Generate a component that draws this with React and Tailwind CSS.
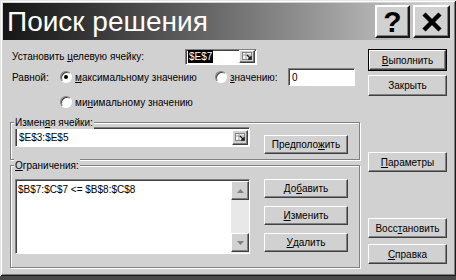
import React from "react";

const raised =
  "border border-t-white border-l-white border-r-[#404040] border-b-[#404040] shadow-[inset_-1px_-1px_0_#808080] bg-[#d1d1d1]";
const sunken =
  "border border-t-[#808080] border-l-[#808080] border-r-white border-b-white shadow-[inset_1px_1px_0_#404040] bg-white";

function Btn({ children, className = "", def = false }) {
  if (def) {
    return (
      <div className={`border border-black ${className}`}>
        <div className={`flex h-full w-full items-center justify-center ${raised}`}>{children}</div>
      </div>
    );
  }
  return <div className={`flex items-center justify-center ${raised} ${className}`}>{children}</div>;
}

function RefBtn({ className = "" }) {
  return (
    <div className={`flex items-center justify-center ${raised} ${className}`}>
      <svg width="11" height="9" viewBox="0 0 11 9">
        <rect x="0.5" y="0.5" width="9" height="7" fill="#f4f4f4" stroke="#808080" />
        <line x1="0.5" y1="3" x2="9.5" y2="3" stroke="#9a9a9a" />
        <line x1="4" y1="0.5" x2="4" y2="7.5" stroke="#9a9a9a" />
        <path d="M5 3 L9 7 M6 7 L9 7 L9 4" stroke="#202020" strokeWidth="1.4" fill="none" />
      </svg>
    </div>
  );
}

function Radio({ checked }) {
  return (
    <div className="relative h-[12px] w-[12px] shrink-0 rounded-full border border-t-[#808080] border-l-[#808080] border-r-white border-b-white bg-white shadow-[inset_1px_1px_0_#404040]">
      {checked && <div className="absolute left-[3px] top-[3px] h-[4px] w-[4px] rounded-full bg-black" />}
    </div>
  );
}

function Arrow({ up }) {
  return (
    <svg width="7" height="4" viewBox="0 0 7 4">
      {up ? <path d="M0 4 L3.5 0 L7 4 Z" fill="#808080" /> : <path d="M0 0 L3.5 4 L7 0 Z" fill="#808080" />}
    </svg>
  );
}

export default function App() {
  return (
    <div className="h-[280px] w-[456px] overflow-hidden bg-[#4a4a4a] font-['Liberation_Sans',Arial,sans-serif] text-[10px] leading-[13px] text-black">
      <div className="flex h-[276px] w-[456px] flex-col bg-[#d1d1d1] p-[3px] shadow-[inset_1px_1px_0_#e6e6e6,inset_-1px_-1px_0_#1a1a1a,inset_2px_2px_0_#ffffff,inset_-2px_-2px_0_#808080]">
        {/* Title bar */}
        <div className="flex h-[37px] shrink-0 items-center bg-gradient-to-r from-[#161616] to-[#d8d8d8] pl-[4px] pr-[3px]">
          <span className="text-[28px] leading-[30px] text-white">Поиск решения</span>
          <div className="ml-auto flex gap-[3px]">
            <div className="flex h-[33px] w-[35px] items-center justify-center border-2 border-t-white border-l-white border-r-[#1a1a1a] border-b-[#1a1a1a] bg-[#d1d1d1] shadow-[inset_-1px_-1px_0_#808080]">
              <span className="text-[30px] font-bold leading-[30px]">?</span>
            </div>
            <div className="flex h-[33px] w-[37px] items-center justify-center border-2 border-t-white border-l-white border-r-[#1a1a1a] border-b-[#1a1a1a] bg-[#d1d1d1] shadow-[inset_-1px_-1px_0_#808080]">
              <svg width="22" height="22" viewBox="0 0 22 22">
                <path d="M3 3 L19 19 M19 3 L3 19" stroke="#000" strokeWidth="4.5" />
              </svg>
            </div>
          </div>
        </div>

        {/* Body */}
        <div className="flex flex-1">
          {/* Left column */}
          <div className="ml-[7px] flex w-[350px] flex-col">
            <div className="mt-[9px] flex h-[15px] items-center">
              <span className="w-[175px] pl-[2px]">
                Установить <u>ц</u>елевую ячейку:
              </span>
              <div className={`flex h-[16px] w-[72px] items-center ${sunken} p-[1px]`}>
                <span className="ml-[1px] bg-black px-[1px] text-white">$E$7</span>
                <RefBtn className="ml-auto h-[13px] w-[16px]" />
              </div>
            </div>

            <div className="mt-[4px] flex h-[18px] items-center">
              <span className="w-[50px] pl-[2px]">Равной:</span>
              <Radio checked />
              <span className="ml-[3px] w-[140px]">
                <u>м</u>аксимальному значению
              </span>
              <Radio />
              <span className="ml-[3px] w-[58px]">
                <u>з</u>начению:
              </span>
              <div className={`flex h-[18px] w-[67px] items-center pl-[3px] ${sunken}`}>0</div>
            </div>

            <div className="mt-[9px] flex h-[14px] items-center">
              <span className="w-[50px]" />
              <Radio />
              <span className="ml-[3px]">
                ми<u>н</u>имальному значению
              </span>
            </div>

            {/* Group 1 */}
            <div className="relative mt-[13px] flex h-[38px] border border-[#808080] px-[4px] pt-[4px] shadow-[inset_1px_1px_0_#fff,1px_1px_0_#fff]">
              <span className="absolute -top-[7px] left-[3px] bg-[#d1d1d1] px-[1px]">
                Измен<u>я</u>я ячейки:
              </span>
              <div className={`flex h-[20px] w-[235px] items-center ${sunken} pl-[3px] pr-[1px]`}>
                <span>$E$3:$E$5</span>
                <RefBtn className="ml-auto h-[15px] w-[16px]" />
              </div>
              <Btn className="ml-[14px] mt-[8px] h-[19px] w-[84px]">
                Предполо<u>ж</u>ить
              </Btn>
            </div>

            {/* Group 2 */}
            <div className="relative mt-[5px] flex h-[103px] border border-[#808080] px-[4px] pt-[13px] shadow-[inset_1px_1px_0_#fff,1px_1px_0_#fff]">
              <span className="absolute -top-[7px] left-[3px] bg-[#d1d1d1] px-[1px]">
                <u>О</u>граничения:
              </span>
              <div className={`flex h-[75px] w-[235px] ${sunken} pl-[1px] pt-[1px]`}>
                <div className="flex-1 pl-[1px] pt-[2px]">$B$7:$C$7 &lt;= $B$8:$C$8</div>
                <div className="flex w-[18px] flex-col bg-[#e8e8e8]">
                  <div className={`flex h-[19px] items-center justify-center ${raised}`}>
                    <Arrow up />
                  </div>
                  <div className="flex-1" />
                  <div className={`mb-[1px] flex h-[19px] items-center justify-center ${raised}`}>
                    <Arrow />
                  </div>
                </div>
              </div>
              <div className="ml-[14px] flex flex-col gap-[8px]">
                <Btn className="h-[19px] w-[84px]">
                  До<u>б</u>авить
                </Btn>
                <Btn className="h-[19px] w-[84px]">
                  <u>И</u>зменить
                </Btn>
                <Btn className="h-[19px] w-[84px]">
                  <u>У</u>далить
                </Btn>
              </div>
            </div>
          </div>

          {/* Right column */}
          <div className="ml-[8px] flex w-[79px] flex-col">
            <Btn def className="mt-[9px] h-[22px]">
              <u>В</u>ыполнить
            </Btn>
            <Btn className="mt-[4px] h-[21px]">Закрыть</Btn>
            <Btn className="mt-[56px] h-[20px]">
              <u>П</u>араметры
            </Btn>
            <Btn className="mt-[46px] h-[20px]">
              Восс<u>т</u>ановить
            </Btn>
            <Btn className="mt-[6px] h-[20px]">
              <u>С</u>правка
            </Btn>
          </div>
        </div>
      </div>
    </div>
  );
}
